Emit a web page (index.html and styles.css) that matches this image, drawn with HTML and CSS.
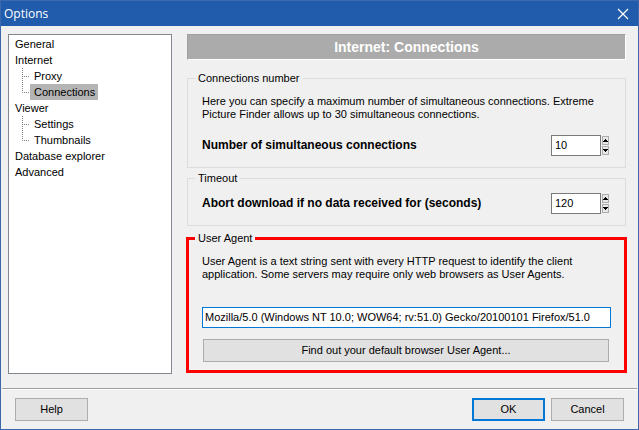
FILE: index.html
```html
<!DOCTYPE html>
<html lang="en">
<head>
<meta charset="utf-8">
<title>Options</title>
<link rel="stylesheet" href="styles.css">
</head>
<body>
<div class="window">
  <header class="titlebar">
    <h1 class="title">Options</h1>
    <button class="close" type="button" aria-label="Close">
      <svg width="12" height="12" viewBox="0 0 12 12" aria-hidden="true"><path d="M1 1L11 11M11 1L1 11" fill="none" stroke="#fff" stroke-width="1.2"/></svg>
    </button>
  </header>
  <form class="form">
    <div class="body">
      <nav class="tree" aria-label="Sections">
        <ul>
          <li><a href="#general">General</a></li>
          <li><a href="#internet">Internet</a>
            <ul class="branch">
              <li><a href="#proxy">Proxy</a></li>
              <li><a class="selected" href="#connections" aria-current="page">Connections</a></li>
            </ul>
          </li>
          <li><a href="#viewer">Viewer</a>
            <ul class="branch">
              <li><a href="#settings">Settings</a></li>
              <li><a href="#thumbnails">Thumbnails</a></li>
            </ul>
          </li>
          <li><a href="#database">Database explorer</a></li>
          <li><a href="#advanced">Advanced</a></li>
        </ul>
      </nav>
      <main class="page">
        <h2 class="banner">Internet: Connections</h2>
        <fieldset class="group">
          <legend>Connections number</legend>
          <p class="note">Here you can specify a maximum number of simultaneous connections. Extreme Picture Finder allows up to 30 simultaneous connections.</p>
          <div class="row">
            <label for="count">Number of simultaneous connections</label>
            <div class="spin">
              <input id="count" type="text" inputmode="numeric" value="10">
              <div class="arrows">
                <button type="button" aria-label="More connections"><svg width="5" height="3" viewBox="0 0 5 3" shape-rendering="crispEdges"><path d="M2 0h1v1h1v1h1v1H0V2h1V1h1z"/></svg></button>
                <button type="button" aria-label="Fewer connections"><svg width="5" height="3" viewBox="0 0 5 3" shape-rendering="crispEdges"><path d="M0 0h5v1H4v1H3v1H2V2H1V1H0z"/></svg></button>
              </div>
            </div>
          </div>
        </fieldset>
        <fieldset class="group">
          <legend>Timeout</legend>
          <div class="row">
            <label for="timeout">Abort download if no data received for (seconds)</label>
            <div class="spin">
              <input id="timeout" type="text" inputmode="numeric" value="120">
              <div class="arrows">
                <button type="button" aria-label="Longer timeout"><svg width="5" height="3" viewBox="0 0 5 3" shape-rendering="crispEdges"><path d="M2 0h1v1h1v1h1v1H0V2h1V1h1z"/></svg></button>
                <button type="button" aria-label="Shorter timeout"><svg width="5" height="3" viewBox="0 0 5 3" shape-rendering="crispEdges"><path d="M0 0h5v1H4v1H3v1H2V2H1V1H0z"/></svg></button>
              </div>
            </div>
          </div>
        </fieldset>
        <fieldset class="group marked">
          <legend>User Agent</legend>
          <p class="note">User Agent is a text string sent with every HTTP request to identify the client application. Some servers may require only web browsers as User Agents.</p>
          <input class="agent" type="text" aria-label="User Agent" value="Mozilla/5.0 (Windows NT 10.0; WOW64; rv:51.0) Gecko/20100101 Firefox/51.0">
          <button class="button find" type="button">Find out your default browser User Agent...</button>
        </fieldset>
      </main>
    </div>
    <footer class="footer">
      <button class="button" type="button">Help</button>
      <button class="button primary" type="submit">OK</button>
      <button class="button" type="button">Cancel</button>
    </footer>
  </form>
</div>
</body>
</html>
```
FILE: styles.css
```css
* {
  box-sizing: border-box;
}

body {
  margin: 0;
  font: 11px/13px "Liberation Sans", Arial, sans-serif;
  color: #000;
}

input,
button {
  font: inherit;
  color: inherit;
  margin: 0;
  border-radius: 0;
}

.window {
  display: flex;
  flex-direction: column;
  min-height: 100vh;
  border: 1px solid #3c69ae;
  background: #f0f0f0;
}

.titlebar {
  display: flex;
  align-items: center;
  justify-content: space-between;
  height: 25px;
  padding: 0 8px 0 3px;
  background: #215bac;
  color: #fff;
}

.title {
  margin: 0;
  font: 12px/16px "Open Sans", "Noto Sans", sans-serif;
}

.close {
  display: flex;
  padding: 1px;
  border: 0;
  background: none;
}

.form {
  display: flex;
  flex: 1;
  flex-direction: column;
}

.body {
  display: flex;
  flex: 1;
  gap: 15px;
  padding: 8px 12px 14px 7px;
}

.tree {
  flex: 0 0 164px;
  padding: 1px 6px;
  border: 1px solid #828790;
  background: #fff;
  line-height: 16px;
}

.tree ul {
  margin: 0;
  padding: 0;
  list-style: none;
}

.tree a {
  display: block;
  width: fit-content;
  color: #000;
  text-decoration: none;
}

.tree .branch {
  padding-left: 7px;
}

.branch li {
  display: flex;
}

.branch li::before {
  content: "";
  width: 8px;
  background:
    repeating-linear-gradient(#808080 0 1px, transparent 1px 2px) 0 0 / 1px 100% no-repeat,
    repeating-linear-gradient(90deg, #808080 0 1px, transparent 1px 2px) 0 8px / 100% 1px no-repeat;
}

.branch li:last-child::before {
  height: 9px;
}

.tree .branch a {
  padding: 0 3px 0 4px;
}

.tree .selected {
  background: #b4b4b4;
}

.page {
  flex: 1;
  min-width: 0;
}

.banner {
  margin: 0 0 12px;
  border: 1px solid;
  border-color: #a0a0a0 #fff #fff #a0a0a0;
  background: #ababab;
  color: #fff;
  font-size: 14px;
  line-height: 24px;
  text-align: center;
}

.group {
  min-width: 0;
  margin: 0 0 4px;
  padding: 8px 14px 11px;
  border: 1px solid #dcdcdc;
}

.group legend {
  margin-left: -7px;
  padding: 0 3px;
}

.note {
  margin: 2px 0 14px;
}

.row {
  display: flex;
  align-items: center;
  justify-content: space-between;
  padding-right: 2px;
}

.row label {
  font-size: 12px;
  font-weight: bold;
}

.spin {
  display: flex;
  align-items: center;
  gap: 1px;
}

.spin input {
  width: 50px;
  height: 21px;
  padding: 0 3px 1px;
  border: 1px solid #7a7a7a;
  background: #fff;
}

.arrows {
  display: grid;
  gap: 1px;
}

.arrows button {
  display: grid;
  place-items: center;
  width: 7px;
  height: 9px;
  padding: 0;
  border: 1px solid #adadad;
  background: #e8e8e8;
}

.marked {
  margin: 6px -1px 0;
  padding: 8px 13px;
  border: 3px solid #f00;
}

.marked .note {
  margin-bottom: 26px;
}

.agent {
  display: block;
  width: 100%;
  height: 21px;
  padding: 0 2px 1px;
  border: 1px solid #0078d7;
  background: #fff;
}

.button {
  width: 73px;
  height: 23px;
  padding: 0;
  border: 1px solid #adadad;
  background: #e1e1e1;
}

.button.find {
  display: block;
  width: calc(100% - 3px);
  margin: 11px 2px 0 1px;
}

.button.primary {
  margin-left: auto;
  border: 2px solid #0078d7;
}

.footer {
  display: flex;
  gap: 6px;
  margin: 0 1px;
  padding: 9px 13px 8px;
  border-top: 1px solid #a0a0a0;
  box-shadow: inset 0 1px #fff;
}
```
